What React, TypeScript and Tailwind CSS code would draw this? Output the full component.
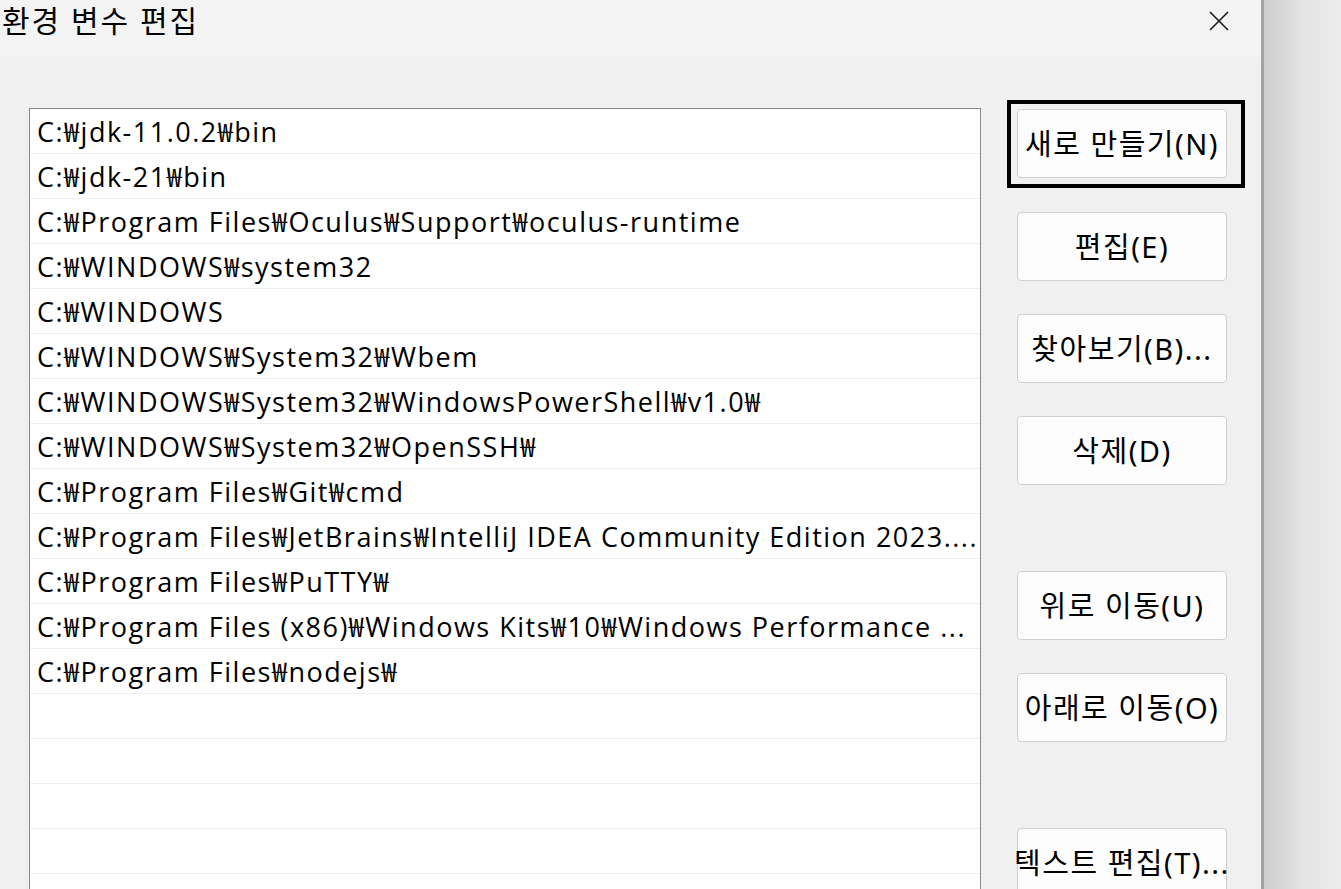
import React from 'react';

const FONT = "font-['Noto_Sans','Noto_Sans_CJK_KR',sans-serif]";
const LIST_FONT = "font-['Open_Sans','Noto_Sans_CJK_KR',sans-serif]";

const PATHS = [
  'C:₩jdk-11.0.2₩bin',
  'C:₩jdk-21₩bin',
  'C:₩Program Files₩Oculus₩Support₩oculus-runtime',
  'C:₩WINDOWS₩system32',
  'C:₩WINDOWS',
  'C:₩WINDOWS₩System32₩Wbem',
  'C:₩WINDOWS₩System32₩WindowsPowerShell₩v1.0₩',
  'C:₩WINDOWS₩System32₩OpenSSH₩',
  'C:₩Program Files₩Git₩cmd',
  'C:₩Program Files₩JetBrains₩IntelliJ IDEA Community Edition 2023....',
  'C:₩Program Files₩PuTTY₩',
  'C:₩Program Files (x86)₩Windows Kits₩10₩Windows Performance ...',
  'C:₩Program Files₩nodejs₩',
  '',
  '',
  '',
  '',
  '',
];

function DialogButton({ label, focused }: { label: string; focused?: boolean }) {
  return (
    <div className="relative">
      {focused && (
        <div className="absolute left-[-10px] top-[-9px] w-[238px] h-[88px] border-4 border-black" />
      )}
      <button className="w-[210px] h-[69px] rounded-[4px] border border-[#d0d0d0] bg-[#fdfdfd] text-[29px] text-black flex items-center justify-center whitespace-nowrap tracking-[1.5px]">
        {label}
      </button>
    </div>
  );
}

export default function App() {
  return (
    <div className={`w-[1341px] h-[889px] overflow-hidden flex bg-[#f0f0f0] ${FONT}`}>
      {/* dialog */}
      <div className="w-[1261px] h-full flex flex-col overflow-hidden">
        {/* title bar */}
        <div className="h-[57px] shrink-0 bg-[#f3f3f3] flex items-start justify-between">
          <span className="text-[30px] leading-none text-black pl-[2px] pt-[6px] tracking-[2px]">환경 변수 편집</span>
          <svg width="20" height="20" viewBox="0 0 20 20" className="mt-[11px] mr-[32px]">
            <path d="M1 1 L19 19 M19 1 L1 19" stroke="#1a1a1a" strokeWidth="1.6" />
          </svg>
        </div>

        {/* body */}
        <div className="flex-1 min-h-0 flex pl-[29px] pt-[51px] overflow-hidden">
          <div className={`w-[952px] h-[900px] shrink-0 bg-white border-l border-t border-r border-[#828790] ${LIST_FONT}`}>
            {PATHS.map((p, i) => (
              <div
                key={i}
                className="h-[45px] border-b border-[#f0f0f0] flex items-center pl-[7px] pt-[3px] text-[27px] tracking-[1.5px] text-black whitespace-nowrap overflow-hidden"
              >
                {p}
              </div>
            ))}
          </div>

          <div className="ml-[36px] pt-px flex flex-col">
            <DialogButton label="새로 만들기(N)" focused />
            <div className="mt-[34px]"><DialogButton label="편집(E)" /></div>
            <div className="mt-[33px]"><DialogButton label="찾아보기(B)..." /></div>
            <div className="mt-[33px]"><DialogButton label="삭제(D)" /></div>
            <div className="mt-[86px]"><DialogButton label="위로 이동(U)" /></div>
            <div className="mt-[33px]"><DialogButton label="아래로 이동(O)" /></div>
            <div className="mt-[86px]"><DialogButton label="텍스트 편집(T)..." /></div>
          </div>
        </div>
      </div>

      {/* window edge and backdrop */}
      <div className="w-[3px] h-full bg-[#a3a3a3]" />
      <div className="flex-1 h-full bg-gradient-to-r from-[#cdcdcd] via-[#e4e4e4] to-[#ececec]" />
    </div>
  );
}
